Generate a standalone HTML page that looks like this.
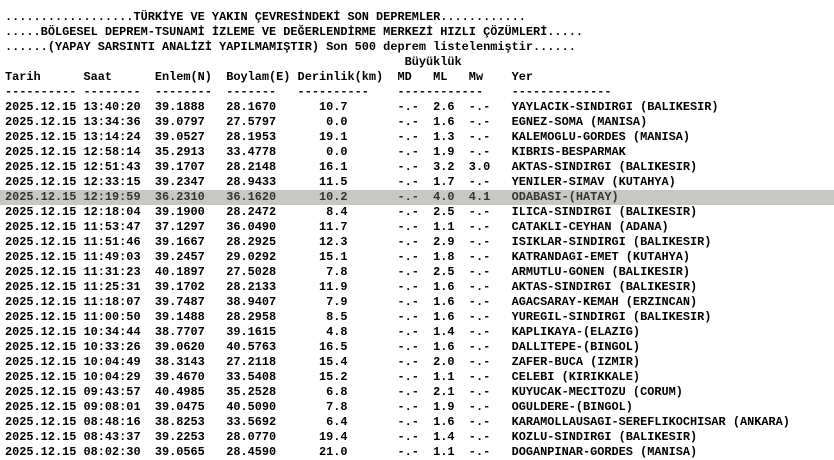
<!DOCTYPE html>
<html><head><meta charset="utf-8">
<style>
html,body{margin:0;padding:0;background:#fff;width:834px;height:460px;overflow:hidden}
pre{margin:0;padding:10px 0 0 5px;font-family:"Liberation Mono","DejaVu Sans Mono",monospace;font-weight:bold;font-size:11.9px;line-height:15px;color:#000;white-space:pre}
.hl{display:block;background:#c8c8c2;color:#333;margin-left:-5px;padding-left:5px;width:829px}
</style></head><body>
<pre>..................TÜRKİYE VE YAKIN ÇEVRESİNDEKİ SON DEPREMLER............
.....BÖLGESEL DEPREM-TSUNAMİ İZLEME VE DEĞERLENDİRME MERKEZİ HIZLI ÇÖZÜMLERİ.....
......(YAPAY SARSINTI ANALİZİ YAPILMAMIŞTIR) Son 500 deprem listelenmiştir......
                                                        Büyüklük
Tarih      Saat      Enlem(N)  Boylam(E) Derinlik(km)  MD   ML   Mw    Yer
---------- --------  --------  -------   ----------    ------------    --------------
2025.12.15 13:40:20  39.1888   28.1670      10.7       -.-  2.6  -.-   YAYLACIK-SINDIRGI (BALIKESIR)
2025.12.15 13:34:36  39.0797   27.5797       0.0       -.-  1.6  -.-   EGNEZ-SOMA (MANISA)
2025.12.15 13:14:24  39.0527   28.1953      19.1       -.-  1.3  -.-   KALEMOGLU-GORDES (MANISA)
2025.12.15 12:58:14  35.2913   33.4778       0.0       -.-  1.9  -.-   KIBRIS-BESPARMAK
2025.12.15 12:51:43  39.1707   28.2148      16.1       -.-  3.2  3.0   AKTAS-SINDIRGI (BALIKESIR)
2025.12.15 12:33:15  39.2347   28.9433      11.5       -.-  1.7  -.-   YENILER-SIMAV (KUTAHYA)
<span class="hl">2025.12.15 12:19:59  36.2310   36.1620      10.2       -.-  4.0  4.1   ODABASI-(HATAY)</span>2025.12.15 12:18:04  39.1900   28.2472       8.4       -.-  2.5  -.-   ILICA-SINDIRGI (BALIKESIR)
2025.12.15 11:53:47  37.1297   36.0490      11.7       -.-  1.1  -.-   CATAKLI-CEYHAN (ADANA)
2025.12.15 11:51:46  39.1667   28.2925      12.3       -.-  2.9  -.-   ISIKLAR-SINDIRGI (BALIKESIR)
2025.12.15 11:49:03  39.2457   29.0292      15.1       -.-  1.8  -.-   KATRANDAGI-EMET (KUTAHYA)
2025.12.15 11:31:23  40.1897   27.5028       7.8       -.-  2.5  -.-   ARMUTLU-GONEN (BALIKESIR)
2025.12.15 11:25:31  39.1702   28.2133      11.9       -.-  1.6  -.-   AKTAS-SINDIRGI (BALIKESIR)
2025.12.15 11:18:07  39.7487   38.9407       7.9       -.-  1.6  -.-   AGACSARAY-KEMAH (ERZINCAN)
2025.12.15 11:00:50  39.1488   28.2958       8.5       -.-  1.6  -.-   YUREGIL-SINDIRGI (BALIKESIR)
2025.12.15 10:34:44  38.7707   39.1615       4.8       -.-  1.4  -.-   KAPLIKAYA-(ELAZIG)
2025.12.15 10:33:26  39.0620   40.5763      16.5       -.-  1.6  -.-   DALLITEPE-(BINGOL)
2025.12.15 10:04:49  38.3143   27.2118      15.4       -.-  2.0  -.-   ZAFER-BUCA (IZMIR)
2025.12.15 10:04:29  39.4670   33.5408      15.2       -.-  1.1  -.-   CELEBI (KIRIKKALE)
2025.12.15 09:43:57  40.4985   35.2528       6.8       -.-  2.1  -.-   KUYUCAK-MECITOZU (CORUM)
2025.12.15 09:08:01  39.0475   40.5090       7.8       -.-  1.9  -.-   OGULDERE-(BINGOL)
2025.12.15 08:48:16  38.8253   33.5692       6.4       -.-  1.6  -.-   KARAMOLLAUSAGI-SEREFLIKOCHISAR (ANKARA)
2025.12.15 08:43:37  39.2253   28.0770      19.4       -.-  1.4  -.-   KOZLU-SINDIRGI (BALIKESIR)
2025.12.15 08:02:30  39.0565   28.4590      21.0       -.-  1.1  -.-   DOGANPINAR-GORDES (MANISA)</pre>
</body></html>
